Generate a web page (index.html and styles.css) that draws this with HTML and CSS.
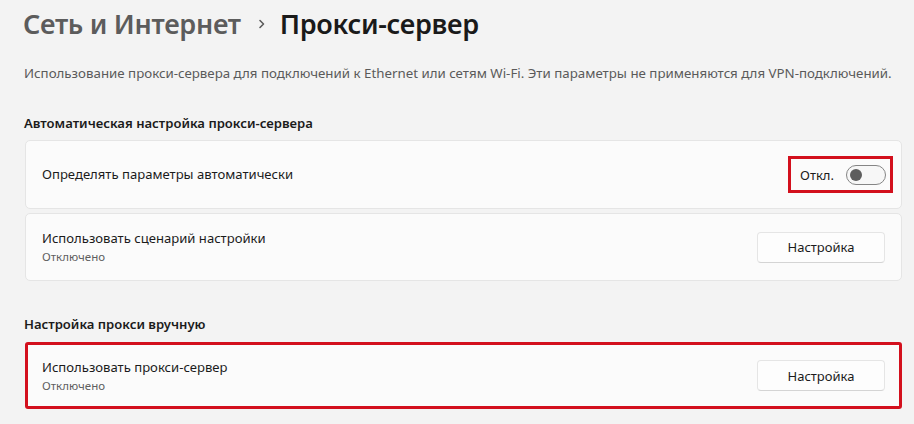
FILE: index.html
```html
<!DOCTYPE html>
<html lang="ru">
<head>
<meta charset="utf-8">
<title>Прокси-сервер</title>
<link rel="stylesheet" href="styles.css">
</head>
<body>
<main class="page">
  <h1 class="title">
    <span class="crumb">Сеть и Интернет</span>
    <svg class="chev" width="8" height="10" viewBox="0 0 8 10"><path d="M2 1.5 L5.5 5 L2 8.5" fill="none" stroke="#5c5c5c" stroke-width="1.6" stroke-linecap="round" stroke-linejoin="round"/></svg>
    <span class="current">Прокси-сервер</span>
  </h1>
  <p class="desc">Использование прокси-сервера для подключений к Ethernet или сетям Wi-Fi. Эти параметры не применяются для VPN-подключений.</p>

  <h2 class="section">Автоматическая настройка прокси-сервера</h2>
  <div class="card card-tall">
    <div class="card-text">
      <div class="card-title">Определять параметры автоматически</div>
    </div>
    <div class="highlight">
      <span class="toggle-label">Откл.</span>
      <span class="toggle"><span class="knob"></span></span>
    </div>
  </div>
  <div class="card card-gap">
    <div class="card-text">
      <div class="card-title">Использовать сценарий настройки</div>
      <div class="card-sub">Отключено</div>
    </div>
    <button class="btn">Настройка</button>
  </div>

  <h2 class="section section-2">Настройка прокси вручную</h2>
  <div class="card card-red">
    <div class="card-text">
      <div class="card-title">Использовать прокси-сервер</div>
      <div class="card-sub">Отключено</div>
    </div>
    <button class="btn">Настройка</button>
  </div>
</main>
</body>
</html>
```

FILE: styles.css
```css
html, body {
  margin: 0;
  padding: 0;
  background: #f3f3f3;
}
body {
  font-family: "Noto Sans", "Open Sans", sans-serif;
  color: #1b1b1b;
  width: 914px;
  height: 424px;
  overflow: hidden;
}
.page {
  padding: 0 12px 0 25px;
}
.title {
  margin: 6px 0 0 -2px;
  height: 36px;
  display: flex;
  align-items: center;
  font-size: 27px;
  font-weight: 600;
  line-height: 36px;
  letter-spacing: -0.3px;
}
.crumb {
  color: #5c5c5c;
}
.chev {
  margin: 0 14px 0 17px;
}
.current {
  color: #1a1a1a;
}
.desc {
  margin: 21px 0 0 -1px;
  font-size: 13.3px;
  line-height: 20px;
  color: #5a5a5a;
  white-space: nowrap;
}
.section {
  margin: 30px 0 0 -1px;
  font-size: 13.1px;
  font-weight: 600;
  line-height: 20px;
  color: #1b1b1b;
}
.section-2 {
  margin-top: 33px;
}
.card {
  margin-top: 7px;
  box-sizing: border-box;
  height: 68px;
  background: #fbfbfb;
  border: 1px solid #e5e5e5;
  border-radius: 5px;
  display: flex;
  align-items: center;
  justify-content: space-between;
  padding: 0 16px 0 16px;
}
.card-tall {
  height: 69px;
}
.card-gap {
  margin-top: 4px;
}
.card-title {
  font-size: 13.1px;
  line-height: 19px;
  color: #1b1b1b;
}
.card-sub {
  font-size: 11.5px;
  line-height: 16px;
  color: #5f5f5f;
  margin-top: 1px;
}
.card-red {
  margin-top: 8px;
  height: 67px;
  border: 3px solid #d3101d;
  border-radius: 3px;
  padding: 0 14px;
}
.highlight {
  box-sizing: border-box;
  height: 37px;
  width: 105px;
  margin-right: -8px;
  border: 3px solid #d3101d;
  display: flex;
  align-items: center;
  padding-left: 9px;
}
.toggle-label {
  font-size: 13px;
  color: #1b1b1b;
}
.toggle {
  margin-left: 12px;
  box-sizing: border-box;
  width: 40px;
  height: 20px;
  border: 1px solid #858585;
  border-radius: 10px;
  background: #f7f7f7;
  display: flex;
  align-items: center;
  padding-left: 3px;
}
.knob {
  width: 12px;
  height: 12px;
  border-radius: 50%;
  background: #5d5d5d;
}
.btn {
  box-sizing: border-box;
  width: 128px;
  height: 31px;
  margin-right: 0;
  background: #fdfdfd;
  border: 1px solid #e5e5e5;
  border-bottom-color: #d4d4d4;
  border-radius: 4px;
  font-family: inherit;
  font-size: 13px;
  color: #1b1b1b;
  padding: 0;
}
```
